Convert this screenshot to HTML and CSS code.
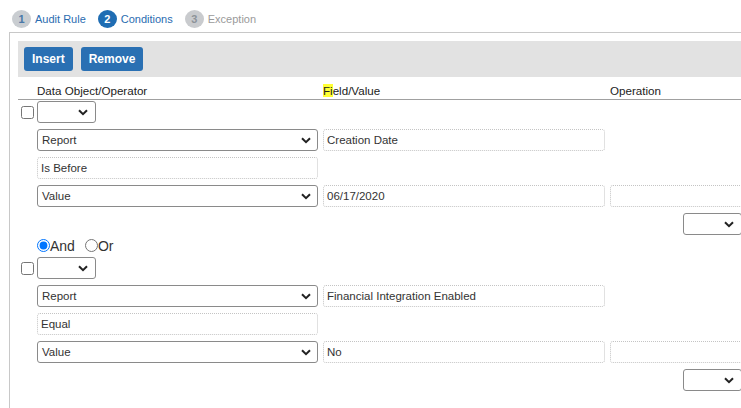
FILE: index.html
```html
<!DOCTYPE html>
<html>
<head>
<meta charset="utf-8">
<link rel="stylesheet" href="styles.css">
</head>
<body>
<div class="tabs">
  <div class="tab done"><span class="num">1</span><span class="label">Audit Rule</span></div>
  <div class="tab active"><span class="num">2</span><span class="label">Conditions</span></div>
  <div class="tab todo"><span class="num">3</span><span class="label">Exception</span></div>
</div>
<div class="panel">
  <div class="toolbar">
    <button class="btn">Insert</button>
    <button class="btn">Remove</button>
  </div>
  <div class="grid header">
    <div></div>
    <div class="hcell">Data Object/Operator</div>
    <div class="hcell"><mark class="hl">Fi</mark>eld/Value</div>
    <div class="hcell">Operation</div>
  </div>

  <div class="grid cond">
    <div class="cb-cell"><input type="checkbox" class="cb"></div>
    <div class="c2"><div class="sel small"><span></span><svg class="chev" viewBox="0 0 10 7" width="10" height="7"><path d="M1 1.2 L5 5.2 L9 1.2" fill="none" stroke="#222" stroke-width="2"/></svg></div></div>

    <div class="c2"><div class="sel wide"><span>Report</span><svg class="chev" viewBox="0 0 10 7" width="10" height="7"><path d="M1 1.2 L5 5.2 L9 1.2" fill="none" stroke="#222" stroke-width="2"/></svg></div></div>
    <div class="c3"><div class="inp">Creation Date</div></div>

    <div class="c2"><div class="inp wide">Is Before</div></div>

    <div class="c2"><div class="sel wide"><span>Value</span><svg class="chev" viewBox="0 0 10 7" width="10" height="7"><path d="M1 1.2 L5 5.2 L9 1.2" fill="none" stroke="#222" stroke-width="2"/></svg></div></div>
    <div class="c3"><div class="inp">06/17/2020</div></div>
    <div class="c4"><div class="inp long"></div></div>

    <div class="c4 right"><div class="sel small"><span></span><svg class="chev" viewBox="0 0 10 7" width="10" height="7"><path d="M1 1.2 L5 5.2 L9 1.2" fill="none" stroke="#222" stroke-width="2"/></svg></div></div>
  </div>

  <div class="grid radios">
    <div></div>
    <div class="c2 radio-row">
      <label class="rl"><input type="radio" name="op" checked>And</label>
      <label class="rl"><input type="radio" name="op">Or</label>
    </div>
  </div>

  <div class="grid cond">
    <div class="cb-cell"><input type="checkbox" class="cb"></div>
    <div class="c2"><div class="sel small"><span></span><svg class="chev" viewBox="0 0 10 7" width="10" height="7"><path d="M1 1.2 L5 5.2 L9 1.2" fill="none" stroke="#222" stroke-width="2"/></svg></div></div>

    <div class="c2"><div class="sel wide"><span>Report</span><svg class="chev" viewBox="0 0 10 7" width="10" height="7"><path d="M1 1.2 L5 5.2 L9 1.2" fill="none" stroke="#222" stroke-width="2"/></svg></div></div>
    <div class="c3"><div class="inp">Financial Integration Enabled</div></div>

    <div class="c2"><div class="inp wide">Equal</div></div>

    <div class="c2"><div class="sel wide"><span>Value</span><svg class="chev" viewBox="0 0 10 7" width="10" height="7"><path d="M1 1.2 L5 5.2 L9 1.2" fill="none" stroke="#222" stroke-width="2"/></svg></div></div>
    <div class="c3"><div class="inp">No</div></div>
    <div class="c4"><div class="inp long"></div></div>

    <div class="c4 right"><div class="sel small"><span></span><svg class="chev" viewBox="0 0 10 7" width="10" height="7"><path d="M1 1.2 L5 5.2 L9 1.2" fill="none" stroke="#222" stroke-width="2"/></svg></div></div>
  </div>
</div>
</body>
</html>
```
FILE: styles.css
```css
html, body {
  margin: 0;
  padding: 0;
  background: #fff;
  overflow: hidden;
  width: 741px;
  height: 408px;
}
body {
  font-family: "Liberation Sans", Arial, sans-serif;
  font-size: 11.5px;
  color: #333;
}
.tabs {
  display: flex;
  align-items: center;
  gap: 12px;
  padding: 9px 0 0 12px;
  height: 19px;
}
.tab {
  display: flex;
  align-items: center;
  gap: 4px;
}
.num {
  display: inline-flex;
  align-items: center;
  justify-content: center;
  width: 19px;
  height: 18px;
  border-radius: 50%;
  font-size: 11px;
  font-weight: bold;
}
.label { font-size: 11px; }
.done .num { background: #c9cdd1; color: #4a78a8; }
.done .label { color: #2a6cb0; }
.active .num { background: #1f6db3; color: #fff; }
.active .label { color: #2a6cb0; }
.todo .num { background: #c9cbce; color: #8d9399; }
.todo .label { color: #9a9a9a; }

.panel {
  margin: 4px 0 0 9px;
  width: 900px;
  height: 400px;
  border-left: 1px solid #c8c8c8;
  border-top: 1px solid #c8c8c8;
  padding: 8px 0 0 8px;
  box-sizing: border-box;
}
.toolbar {
  background: #e2e2e2;
  height: 36px;
  padding: 6px;
  box-sizing: border-box;
  display: flex;
  gap: 8px;
}
.btn {
  height: 24px;
  padding: 0 8px;
  border: none;
  border-radius: 3px;
  background: #2a70b3;
  color: #fff;
  font-family: "Liberation Sans", Arial, sans-serif;
  font-size: 12px;
  font-weight: bold;
}
.grid {
  display: grid;
  grid-template-columns: 19px 286px 287px 1fr;
}
.header {
  height: 23px;
  border-bottom: 1px solid #a0a0a0;
  box-sizing: border-box;
  align-items: end;
}
.hcell {
  color: #222;
  font-size: 11.6px;
  line-height: 14px;
  padding-bottom: 1px;
}
.hl {
  background: #ffff33;
  color: #222;
  padding: 0;
}
.cond {
  row-gap: 6px;
  padding-top: 1px;
}
.cb-cell {
  grid-column: 1;
  display: flex;
  align-items: center;
}
.cb {
  margin: 0 0 0 3px;
  width: 13px;
  height: 13px;
}
.c2 { grid-column: 2; }
.c3 { grid-column: 3; }
.c4 { grid-column: 4; }
.right { padding-left: 73px; }
.sel {
  height: 22px;
  box-sizing: border-box;
  border: 1px solid #8a8a8a;
  border-radius: 3px;
  display: flex;
  align-items: center;
  justify-content: space-between;
  padding: 0 6px 0 4px;
  background: #fff;
  color: #333;
}
.sel.small { width: 59px; padding-right: 7px; }
.sel.wide { width: 281px; }
.chev { display: block; }
.inp {
  height: 22px;
  box-sizing: border-box;
  border: 1px dotted #c4c4c4;
  border-radius: 3px;
  width: 282px;
  display: flex;
  align-items: center;
  padding-left: 3px;
  color: #333;
}
.inp.wide { width: 281px; }
.inp.long { width: 200px; }
.radios {
  height: 21px;
  align-items: center;
}
.radio-row {
  display: flex;
  align-items: center;
  gap: 10px;
}
.rl {
  display: flex;
  align-items: center;
  font-size: 14px;
  color: #333;
}
.rl input {
  margin: 0;
  width: 13px;
  height: 13px;
}
```
